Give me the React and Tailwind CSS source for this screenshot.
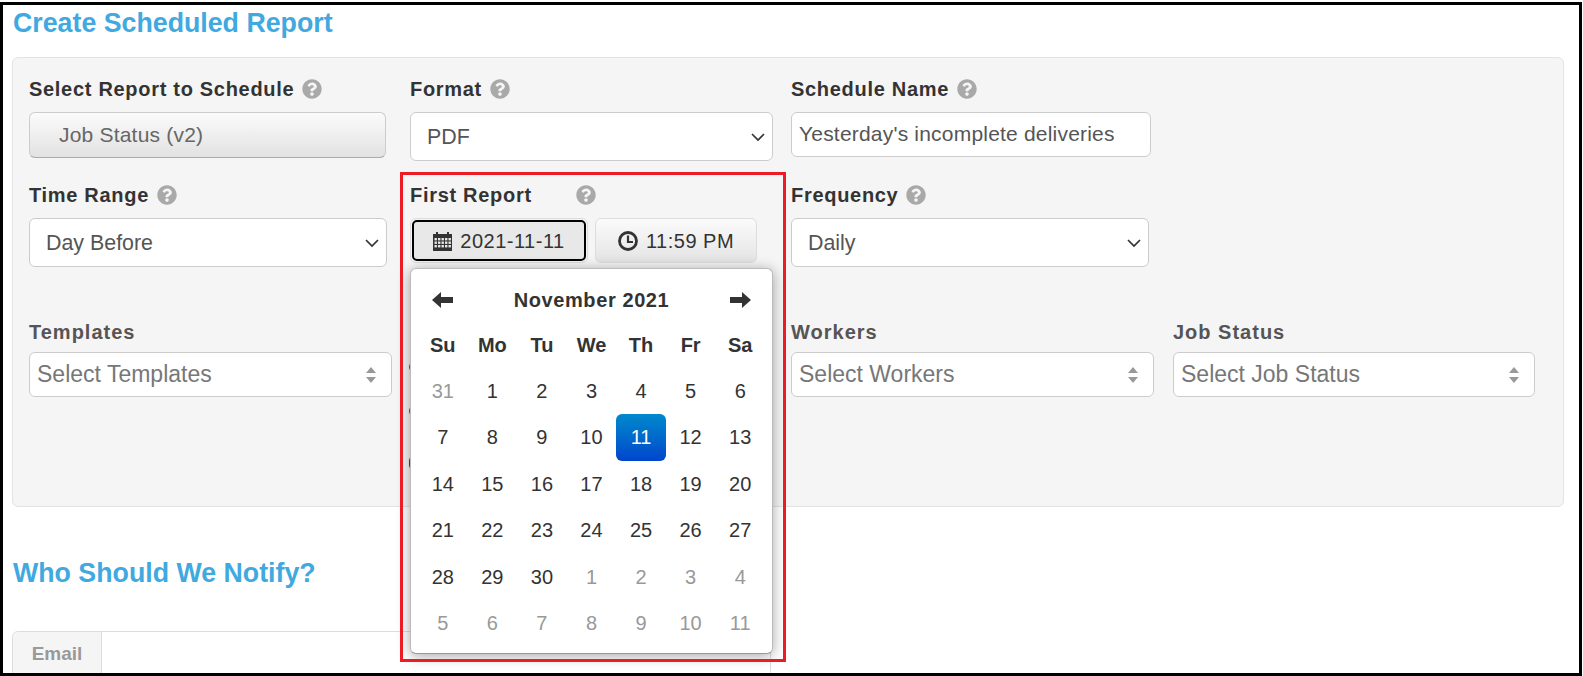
import React from 'react'
import { FaQuestionCircle } from 'react-icons/fa'

const rows = [
    [[31, 1], [1], [2], [3], [4], [5], [6]],
    [[7], [8], [9], [10], [11, 2], [12], [13]],
    [[14], [15], [16], [17], [18], [19], [20]],
    [[21], [22], [23], [24], [25], [26], [27]],
    [[28], [29], [30], [1, 1], [2, 1], [3, 1], [4, 1]],
    [[5, 1], [6, 1], [7, 1], [8, 1], [9, 1], [10, 1], [11, 1]],
]

const Help = ({ className = '' }) => (
    <FaQuestionCircle className={`text-[#a9a9a9] text-[20px] shrink-0 ${className}`} />
)

const Label = ({ children, help = true }) => (
    <div className="flex items-center gap-[8px] h-[24px] mb-[11px] text-[20px] font-bold tracking-[0.7px] leading-none text-[#333]">
        <span>{children}</span>
        {help && <Help />}
    </div>
)

const MutedLabel = ({ children }) => (
    <div className="flex items-center h-[24px] mb-[8px] text-[20px] font-bold tracking-[1px] leading-none text-[#555]">
        {children}
    </div>
)

const Chevron = () => (
    <svg width="16" height="10" viewBox="0 0 16 10" className="shrink-0">
        <polyline points="2,2 8,8 14,2" fill="none" stroke="#333" strokeWidth="1.7" />
    </svg>
)

const SelectBox = ({ value, className }) => (
    <div className={`flex items-center justify-between h-[49px] pl-[16px] pr-[6px] pt-[1px] bg-white border border-[#ccc] rounded-[6px] text-[21.4px] text-[#555] ${className}`}>
        <span>{value}</span>
        <Chevron />
    </div>
)

const Carets = () => (
    <svg width="10" height="16" viewBox="0 0 10 16" className="shrink-0">
        <polygon points="5,0 10,6 0,6" fill="#999" />
        <polygon points="5,16 10,10 0,10" fill="#999" />
    </svg>
)

const MultiBox = ({ placeholder, className }) => (
    <div className={`flex items-center justify-between h-[45px] pl-[7px] pr-[15px] bg-white border border-[#ccc] rounded-[6px] text-[23px] text-[#777] ${className}`}>
        <span>{placeholder}</span>
        <Carets />
    </div>
)

const CalendarIcon = () => (
    <svg width="19" height="20" viewBox="0 0 19 20" className="shrink-0">
        <path fill="#333" d="M0 3h3V1h2v2h9V1h2v2h3v17H0z" />
        <g fill="#e8e8e8">
            {[7, 10.5, 14].map(y => [1.5, 5, 8.5, 12, 15.5].map(x => (
                <rect key={`${x}-${y}`} x={x} y={y} width="2.4" height="2.4" />
            )))}
        </g>
    </svg>
)

const ClockIcon = () => (
    <svg width="20" height="20" viewBox="0 0 20 20" className="shrink-0">
        <circle cx="10" cy="10" r="8.5" fill="none" stroke="#333" strokeWidth="2.8" />
        <path fill="none" stroke="#333" strokeWidth="2.2" d="M10 4.5V11h5" />
    </svg>
)

const Arrow = ({ flip = false }) => (
    <svg width="21" height="16" viewBox="0 0 21 16" className={flip ? 'rotate-180' : ''}>
        <path fill="#333" d="M0 8 9 0v5h12v6H9v5z" />
    </svg>
)

const Calendar = () => (
    <div className="absolute left-0 top-[85px] z-10 w-[363px] h-[386px] pt-[6px] px-[7px] bg-white border border-[#bbb] border-b-[#999] rounded-[6px] shadow-[0_2px_14px_rgba(0,0,0,0.35)]">
        <div className="grid grid-cols-7 auto-rows-[46.4px] text-[20px] text-[#333]">
            <div className="flex items-center justify-center pt-[4px]"><Arrow /></div>
            <div className="col-span-5 flex items-center justify-center pt-[4px] font-bold tracking-[0.6px]">November 2021</div>
            <div className="flex items-center justify-center pt-[4px]"><Arrow flip /></div>
            {['Su', 'Mo', 'Tu', 'We', 'Th', 'Fr', 'Sa'].map(d => (
                <div key={d} className="flex items-center justify-center font-bold">{d}</div>
            ))}
            {rows.flat().map(([n, kind], i) => (
                <div
                    key={i}
                    className={`flex items-center justify-center rounded-[6px] ${kind === 1 ? 'text-[#999]' : ''} ${kind === 2 ? 'text-white bg-gradient-to-b from-[#0088cc] to-[#0044cc]' : ''}`}>
                    {n}
                </div>
            ))}
        </div>
    </div>
)

const FirstReport = () => (
    <div className="relative">
        <div className="flex items-center h-[24px] mb-[11px] text-[20px] font-bold tracking-[0.7px] leading-none text-[#333]">
            <span className="w-[166px]">First Report</span>
            <Help />
        </div>
        <div className="flex gap-[7px] h-[45px] text-[20px] tracking-[0.5px] text-[#333]">
            <div className="w-[178px] p-[1px] border border-[#ddd] rounded-[6px]">
                <div className="flex items-center justify-center gap-[8px] h-full bg-[#e8e8e8] border-2 border-black rounded-[5px]">
                    <CalendarIcon />
                    <span>2021-11-11</span>
                </div>
            </div>
            <div className="flex items-center justify-center gap-[8px] w-[162px] border border-[#ddd] rounded-[6px] bg-gradient-to-b from-[#fbfbfb] to-[#e4e4e4]">
                <ClockIcon />
                <span>11:59 PM</span>
            </div>
        </div>
        <Calendar />
    </div>
)

const App = () => {
    return (
        <div className="relative w-[1583px] h-[676px] overflow-hidden bg-white font-['Liberation_Sans',Arial,sans-serif]">
            <div className="px-[12px] w-[1576px]">
                <h1 className="h-[57px] pt-[7px] pl-[1px] text-[26.75px] leading-[33px] font-bold text-[#3fa9e0]">Create Scheduled Report</h1>
                <div className="h-[450px] pt-[19px] pl-[16px] bg-[#f5f5f5] border border-[#e3e3e3] rounded-[6px]">
                    <div className="grid grid-cols-[381px_381px_382px_381px] grid-rows-[106px_137px_auto]">
                        <div>
                            <Label>Select Report to Schedule</Label>
                            <div className="flex items-center h-[46px] w-[357px] pl-[29px] border border-[#ccc] border-b-[#aaa] rounded-[6px] text-[21px] tracking-[0.2px] text-[#666] bg-gradient-to-b from-[#fbfbfb] to-[#e2e2e2]">Job Status (v2)</div>
                        </div>
                        <div>
                            <Label>Format</Label>
                            <SelectBox value="PDF" className="w-[363px] mt-[1px]" />
                        </div>
                        <div className="col-span-2">
                            <Label>Schedule Name</Label>
                            <input
                                readOnly
                                value="Yesterday's incomplete deliveries"
                                className="block mt-[2px] h-[45px] w-[360px] px-[7px] pb-[1px] bg-white border border-[#ccc] rounded-[6px] text-[21px] tracking-[0.2px] text-[#555]" />
                        </div>

                        <div>
                            <Label>Time Range</Label>
                            <SelectBox value="Day Before" className="w-[358px]" />
                        </div>
                        <FirstReport />
                        <div className="col-span-2">
                            <Label>Frequency</Label>
                            <SelectBox value="Daily" className="w-[358px]" />
                        </div>

                        <div>
                            <MutedLabel>Templates</MutedLabel>
                            <MultiBox placeholder="Select Templates" className="w-[363px]" />
                        </div>
                        <div className="flex flex-col pt-[41px] -ml-[1px]">
                            <div className="w-[12px] h-[12px] rounded-full bg-[#1e6fc0]" />
                            <div className="w-[12px] h-[12px] mt-[32px] rounded-full bg-[#555]" />
                            <div className="w-[12px] h-[16px] mt-[38px] rounded-full bg-[#444]" />
                        </div>
                        <div>
                            <MutedLabel>Workers</MutedLabel>
                            <MultiBox placeholder="Select Workers" className="w-[363px]" />
                        </div>
                        <div>
                            <MutedLabel>Job Status</MutedLabel>
                            <MultiBox placeholder="Select Job Status" className="w-[362px]" />
                        </div>
                    </div>
                </div>
                <h2 className="mt-[50px] pl-[1px] text-[26.75px] leading-[33px] font-bold text-[#3fa9e0]">Who Should We Notify?</h2>
                <div className="mt-[41px] flex w-[759px] h-[60px] border border-[#ddd] rounded-tl-[6px]">
                    <div className="w-[89px] pt-[8px] text-center text-[19px] font-bold text-[#999] bg-[#f5f5f5] border-r border-[#ddd] rounded-tl-[6px]">Email</div>
                </div>
            </div>

            {/* annotation frame and red highlight drawn over the screenshot */}
            <div className="absolute left-0 top-[2px] right-[1px] bottom-0 border-[3px] border-black pointer-events-none z-20" />
            <div className="absolute left-[400px] top-[172px] w-[386px] h-[490px] border-[3px] border-[#ed1c24] pointer-events-none z-20" />
        </div>
    )
}

export default App
